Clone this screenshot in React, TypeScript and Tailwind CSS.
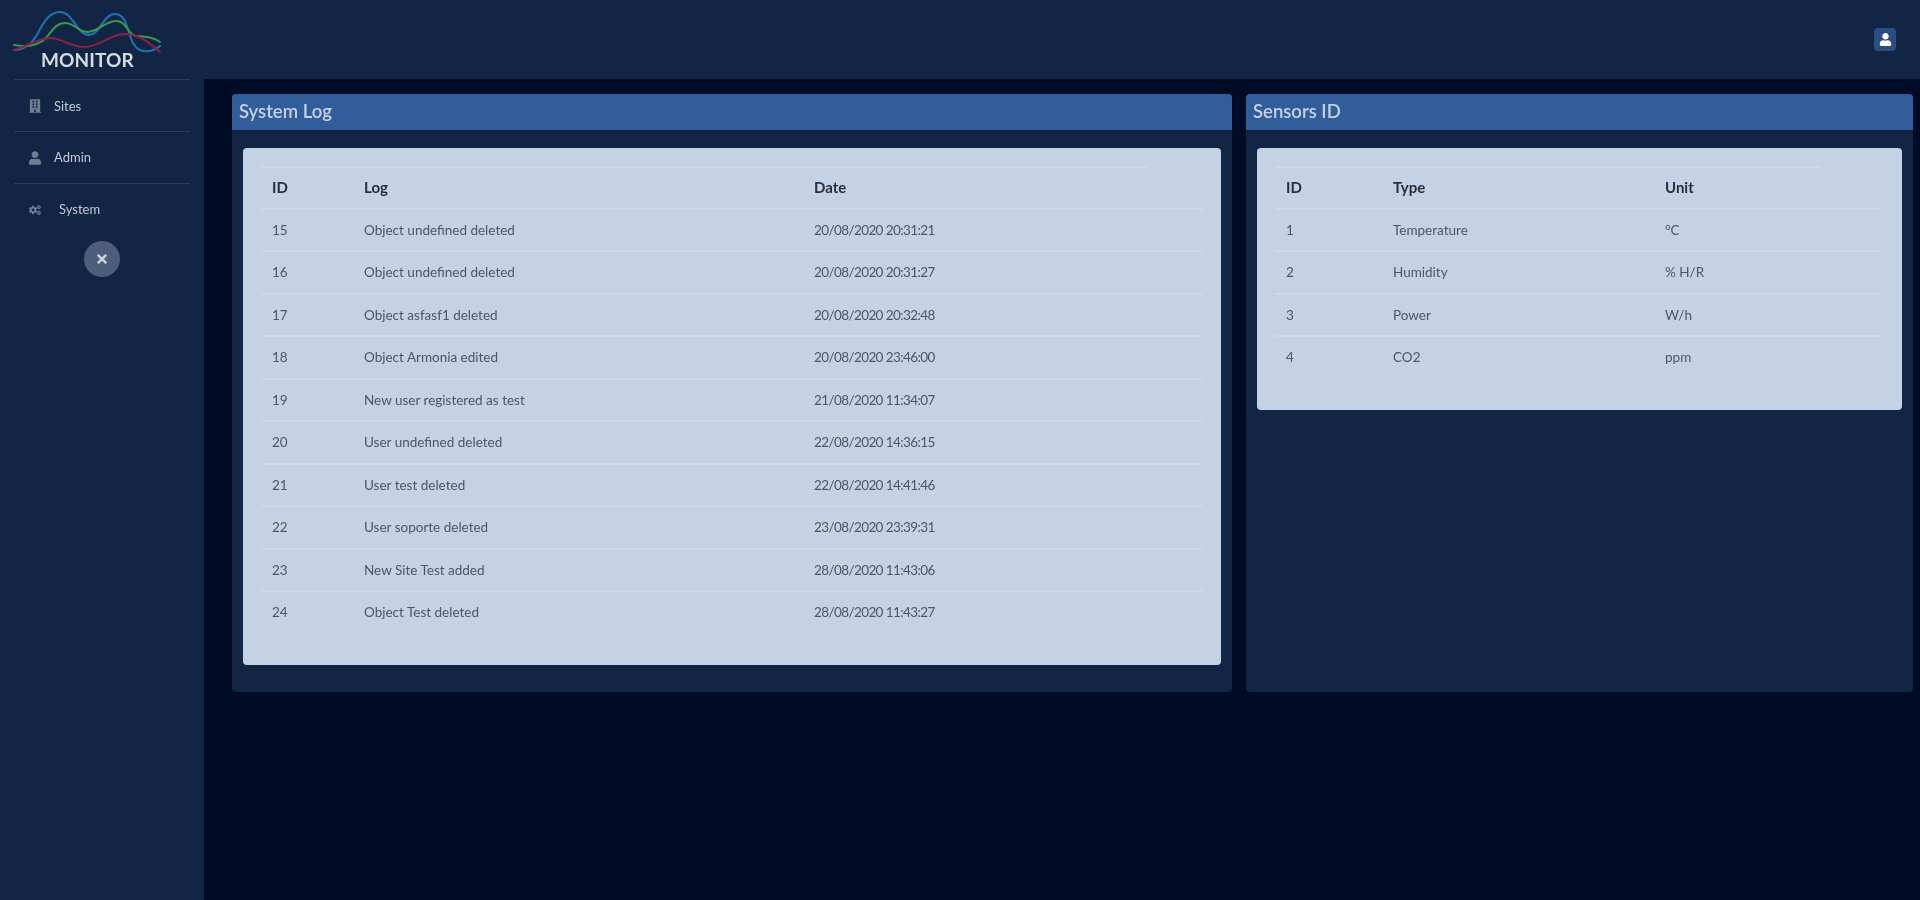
import React from "react";
import { FaBuilding, FaUser, FaCogs, FaTimes } from "react-icons/fa";

const logs: [string, string, string][] = [
  ["15", "Object undefined deleted", "20/08/2020 20:31:21"],
  ["16", "Object undefined deleted", "20/08/2020 20:31:27"],
  ["17", "Object asfasf1 deleted", "20/08/2020 20:32:48"],
  ["18", "Object Armonia edited", "20/08/2020 23:46:00"],
  ["19", "New user registered as test", "21/08/2020 11:34:07"],
  ["20", "User undefined deleted", "22/08/2020 14:36:15"],
  ["21", "User test deleted", "22/08/2020 14:41:46"],
  ["22", "User soporte deleted", "23/08/2020 23:39:31"],
  ["23", "New Site Test added", "28/08/2020 11:43:06"],
  ["24", "Object Test deleted", "28/08/2020 11:43:27"],
];
const sensors: [string, string, string][] = [
  ["1", "Temperature", "°C"],
  ["2", "Humidity", "% H/R"],
  ["3", "Power", "W/h"],
  ["4", "CO2", "ppm"],
];

function Logo() {
  return (
    <div className="relative h-[79px] w-full">
      <svg className="absolute left-0 top-0" width="170" height="56" viewBox="0 0 170 56" fill="none" strokeWidth="2" strokeLinecap="round">
        <path d="M14 50C24 50 32 44 38 33C44 21 50 12 60 12C73 12 77 35 89 35C100 35 103 14 115 14C127 14 127 31 133 43C138 53 150 54 160 46" stroke="#1f74b8" />
        <path d="M14 45C26 47 38 46 46 38C53 30 56 23 65 23C75 23 78 32 88 32C98 32 105 21 116 21C127 21 126 33 136 36C146 37 153 37 160 42" stroke="#3b9a4c" />
        <path d="M14 50C26 47 38 38 50 38C62 38 70 47 84 47C100 47 110 34 125 34C140 34 150 44 160 52" stroke="#8e1f45" />
      </svg>
      <span className="absolute left-[41px] top-[48px] text-[19px] font-bold leading-[24px] tracking-[0.1px] text-[#d6dae1]">MONITOR</span>
    </div>
  );
}

function NavItem({ icon, label, textClass, rowClass }: { icon: React.ReactNode; label: string; textClass: string; rowClass: string }) {
  return (
    <div className={`mx-[14px] flex items-center ${rowClass}`}>
      <span className="ml-[15px] flex w-[12px] justify-center text-[#707d92]">{icon}</span>
      <span className={`${textClass} text-[13px] text-[#c2c9d5]`}>{label}</span>
    </div>
  );
}

function Table({ rows, heads, firstCell, cols, lineClass }: { rows: [string, string, string][]; heads: string[]; firstCell: string; cols: string; lineClass: string }) {
  return (
    <div className="flex flex-col">
      <div className={`h-[2px] bg-[#cfd9ea] ${lineClass}`} />
      <div className={`grid h-[39.5px] items-center pb-[2px] ${cols} text-[15px] font-bold text-[#2a2f3b]`}>
        {heads.map((h, i) => (
          <div key={h} className={i === 0 ? firstCell : ""}>{h}</div>
        ))}
      </div>
      {rows.map((r) => (
        <div key={r[0]} className={`grid h-[42.5px] items-center border-t-2 border-[#cfd9ea] ${cols} text-[13.5px] text-[#4f5563]`}>
          {r.map((c, i) => (
            <div key={i} className={i === 0 ? firstCell : c.includes("/2020") ? "tracking-[-0.6px]" : ""}>{c}</div>
          ))}
        </div>
      ))}
    </div>
  );
}

function Panel({ title, className, cardClass, children }: { title: string; className: string; cardClass: string; children: React.ReactNode }) {
  return (
    <section className={`${className} flex flex-col rounded-[4px] bg-[#132545]`}>
      <h2 className="flex h-[36px] items-center rounded-t-[4px] bg-[#325d9b] pl-[7px] text-[18.5px] font-semibold text-[#c5d2e5]">{title}</h2>
      <div className="flex flex-1 flex-col px-[11px] pb-[26px] pt-[18px]">
        <div className={`${cardClass} rounded-[4px] bg-[#c5d2e5] pt-[18px]`}>{children}</div>
      </div>
    </section>
  );
}

export default function App() {
  return (
    <div className="flex h-[900px] w-[1920px] overflow-hidden bg-[#000b26] font-['Lato',sans-serif] blur-[0.5px]">
      <aside className="flex w-[204px] shrink-0 flex-col bg-[#132545]">
        <Logo />
        <div className="mx-[14px] border-t border-[#2b3b59]" />
        <NavItem icon={<FaBuilding size={14} />} label="Sites" textClass="ml-[13px] mt-[2px]" rowClass="h-[51px]" />
        <div className="mx-[14px] border-t border-[#2b3b59]" />
        <NavItem icon={<FaUser size={14} />} label="Admin" textClass="ml-[13px]" rowClass="h-[51px]" />
        <div className="mx-[14px] border-t border-[#2b3b59]" />
        <NavItem icon={<FaCogs size={18} />} label="System" textClass="ml-[18px]" rowClass="h-[52px]" />
        <button className="ml-[84px] mt-[5px] flex h-[36px] w-[36px] items-center justify-center rounded-full bg-[#4e5d79] text-[#ced3dc]">
          <FaTimes size={14} />
        </button>
      </aside>
      <div className="flex min-w-0 flex-1 flex-col">
        <header className="flex h-[79px] items-center justify-end bg-[#132545] pr-[24px]">
          <span className="mt-[-1px] flex h-[23px] w-[22px] items-center justify-center rounded-[4px] bg-[#2a4d82] text-white">
            <FaUser size={13} />
          </span>
        </header>
        <main className="flex h-[613px] gap-[14px] pl-[28px] pr-[7px] pt-[15px]">
          <Panel title="System Log" className="w-[1000px]" cardClass="h-[517px] pl-[19px] pr-[19px]">
            <Table rows={logs} heads={["ID", "Log", "Date"]} firstCell="pl-[10px]" cols="grid-cols-[102px_450px_1fr]" lineClass="w-[885px]" />
          </Panel>
          <Panel title="Sensors ID" className="w-[667px]" cardClass="h-[262px] pl-[18px] pr-[21px]">
            <Table rows={sensors} heads={["ID", "Type", "Unit"]} firstCell="pl-[11px]" cols="grid-cols-[118px_272px_1fr]" lineClass="w-[545px]" />
          </Panel>
        </main>
      </div>
    </div>
  );
}
